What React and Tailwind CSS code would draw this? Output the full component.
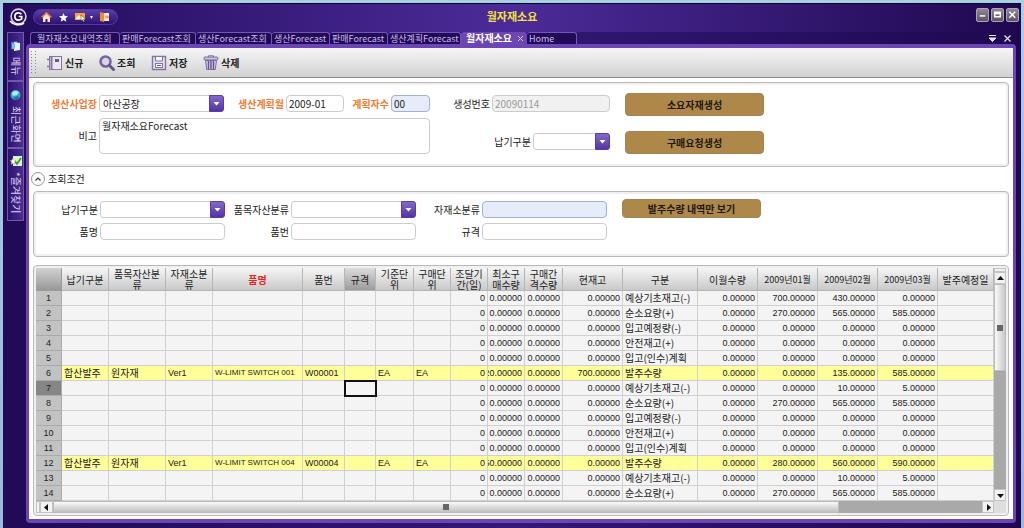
import React from "react";

const toolbarItems = [
  { label: "신규", icon: "note" },
  { label: "조회", icon: "search" },
  { label: "저장", icon: "save" },
  { label: "삭제", icon: "trash" },
];

function ToolIcon({ name }) {
  const common = { width: 16, height: 16, viewBox: "0 0 16 16", fill: "none", "aria-hidden": true };
  if (name === "note")
    return (
      <svg {...common}>
        <rect x="2.5" y="1.5" width="12" height="13" fill="#ebe8f2" stroke="#8375a8" />
        <path d="M4.5 1.5v13" stroke="#8375a8" strokeWidth="2" />
        <path d="M0 4.5h3M0 11.5h3" stroke="#8375a8" strokeWidth="1.4" />
        <rect x="8" y="4" width="4" height="3" fill="#6a5a94" />
      </svg>
    );
  if (name === "search")
    return (
      <svg {...common}>
        <circle cx="6.5" cy="6.5" r="5" fill="#d9d2ea" stroke="#7666a0" strokeWidth="2.6" />
        <path d="M10.5 10.5l4 4" stroke="#65558f" strokeWidth="3" strokeLinecap="round" />
      </svg>
    );
  if (name === "save")
    return (
      <svg {...common}>
        <path d="M1.5 1.5h13v13h-13z" fill="#e2deec" stroke="#8375a8" strokeWidth="1.4" />
        <path d="M4.5 2v4h7V2" stroke="#8375a8" fill="#f6f5fa" />
        <rect x="4.5" y="8.5" width="7" height="4" fill="#f6f5fa" stroke="#8375a8" />
        <path d="M6 10.5h4" stroke="#6a5a94" />
      </svg>
    );
  return (
    <svg {...common}>
      <rect x="1" y="2" width="14" height="3" rx="1" fill="#c7bfdb" stroke="#7c6ca3" />
      <path d="M5.5 2V.8h5V2" stroke="#7c6ca3" />
      <path d="M2.5 5.5h11l-1.2 9h-8.6z" fill="#d4cde4" stroke="#7c6ca3" />
      <path d="M5.5 6v8M8 6v8M10.5 6v8" stroke="#65558f" strokeWidth="1.4" />
    </svg>
  );
}

const fieldBase = "min-w-0 border px-[3px] text-[10px] leading-3 text-[#222] outline-none";

function Label({ htmlFor, required, children }) {
  return (
    <label
      htmlFor={htmlFor}
      className={
        required
          ? "whitespace-nowrap text-right text-[10px] leading-3 font-bold text-[#f37a35]"
          : "whitespace-nowrap text-right text-[10px] leading-3 text-[#222]"
      }
    >
      {children}
    </label>
  );
}

function Select({ id, value, className = "" }) {
  return (
    <div className={"relative flex h-[17px] " + className}>
      <select
        id={id}
        defaultValue={value}
        className={fieldBase + " w-full appearance-none rounded-[3px] border-[#ccc] bg-white pr-5"}
      >
        <option value={value}>{value}</option>
      </select>
      <span className="pointer-events-none absolute inset-y-0 right-0 flex w-[15px] items-center justify-center rounded-r-[3px] border border-[#5a3ba6] bg-linear-to-b from-[#8468c8] to-[#5533a4]">
        <svg width="7" height="4" viewBox="0 0 7 4" aria-hidden="true">
          <path d="M0.5 0h6L3.5 3.6z" fill="#fff" />
        </svg>
      </span>
    </div>
  );
}

function TextField({ id, value = "", tone = "plain", className = "" }) {
  const tones = {
    plain: "border-[#ccc] bg-white text-[#222]",
    blue: "border-[#9fb1d6] bg-[#e6ecf9] text-[#222]",
    off: "border-[#ccc] bg-[#f1f1f1] text-[#999]",
  };
  return (
    <input
      id={id}
      type="text"
      defaultValue={value}
      disabled={tone === "off"}
      className={
        "h-[17px] min-w-0 rounded-[4px] border px-[2px] text-[10px] leading-3 outline-none " + tones[tone] + " " + className
      }
    />
  );
}

function GoldButton({ className, children }) {
  return (
    <button
      type="button"
      className={
        "w-[139px] rounded-[4px] border border-[#a58358] bg-[#ae8849] text-[10px] leading-3 font-bold text-[#20180a] " + className
      }
    >
      {children}
    </button>
  );
}

const panel = "rounded-[4px] border border-[#b9b9b9] bg-white inset-ring-2 inset-ring-[#f0f0f0]";

const columns = [
  { lines: ["납기구분"], w: "w-[47px]" },
  { lines: ["품목자산분", "류"], w: "w-[57px]" },
  { lines: ["자재소분", "류"], w: "w-[47px]" },
  { lines: ["품명"], w: "w-[90px]", red: true },
  { lines: ["품번"], w: "w-[42px]" },
  { lines: ["규격"], w: "w-[31px]", active: true },
  { lines: ["기준단", "위"], w: "w-[38px]" },
  { lines: ["구매단", "위"], w: "w-[37px]" },
  { lines: ["조달기", "간(일)"], w: "w-[37px]" },
  { lines: ["최소구", "매수량"], w: "w-[37px]" },
  { lines: ["구매간", "격수량"], w: "w-[38px]" },
  { lines: ["현재고"], w: "w-[60px]" },
  { lines: ["구분"], w: "w-[75px]" },
  { lines: ["이월수량"], w: "w-[60px]" },
  { lines: ["2009년01월"], w: "w-[60px]", small: true },
  { lines: ["2009년02월"], w: "w-[60px]", small: true },
  { lines: ["2009년03월"], w: "w-[60px]", small: true },
  { lines: ["발주예정일"], w: "" },
];

const Z = "0.00000";
const plain = (kind, a = Z, b = Z, c = Z) => ["", "", "", "", "", "", "", "", "0", Z, Z, Z, kind, Z, a, b, c, ""];
const rows = [
  plain("예상기초재고(-)", "700.00000", "430.00000"),
  plain("순소요량(+)", "270.00000", "565.00000", "585.00000"),
  plain("입고예정량(-)"),
  plain("안전재고(+)"),
  plain("입고(인수)계획"),
  ["합산발주", "원자재", "Ver1", "W-LIMIT SWITCH 001", "W00001", "", "EA", "EA", "0", "20.00000", Z, "700.00000", "발주수량", Z, Z, "135.00000", "585.00000", ""],
  plain("예상기초재고(-)", Z, "10.00000", "5.00000"),
  plain("순소요량(+)", "270.00000", "565.00000", "585.00000"),
  plain("입고예정량(-)"),
  plain("안전재고(+)"),
  plain("입고(인수)계획"),
  ["합산발주", "원자재", "Ver1", "W-LIMIT SWITCH 004", "W00004", "", "EA", "EA", "0", "50.00000", Z, Z, "발주수량", Z, "280.00000", "560.00000", "590.00000", ""],
  plain("예상기초재고(-)", Z, "10.00000", "5.00000"),
  plain("순소요량(+)", "270.00000", "565.00000", "585.00000"),
];

const isNumber = (i) => (i >= 8 && i <= 11) || (i >= 13 && i <= 16);
const isCode = (i) => i === 2 || i === 4 || i === 6 || i === 7;

function cellStyle(i) {
  if (isNumber(i)) return "mr-[2px] justify-end font-[Liberation_Sans] text-[9px]";
  if (i === 3) return "pl-[2px] font-[Liberation_Sans] text-[8px]";
  if (isCode(i)) return "pl-[2px] font-[Liberation_Sans] text-[9px]";
  return "pl-[2px] text-[10px]";
}

function Grid() {
  return (
    <table className="w-full table-fixed border-separate border-spacing-0 bg-[#f4f4f4] text-[#222]">
      <thead>
        <tr>
          <th className="h-[23px] w-[26px] border-r border-b border-[#999] bg-linear-to-b from-[#d2d2d2] to-[#999] p-0" aria-label="번호" />
          {columns.map((c) => (
            <th
              key={c.lines.join("")}
              scope="col"
              className={
                "h-[23px] border-r border-b border-[#b5b5b5] bg-linear-to-b p-0 leading-[11px] whitespace-nowrap " +
                c.w +
                (c.active ? " from-[#dcdcdc] to-[#9c9c9c]" : " from-[#f6f6f6] to-[#c9c9c9]") +
                (c.red ? " font-bold text-[#ee2222]" : " font-normal") +
                (c.small ? " text-[9px]" : " text-[10px]")
              }
            >
              {c.lines.map((l) => (
                <span key={l} className="block">
                  {l}
                </span>
              ))}
            </th>
          ))}
        </tr>
      </thead>
      <tbody>
        {rows.map((r, n) => {
          const marked = r[0] !== "";
          return (
            <tr key={n} className={marked ? "bg-[#ffff99]" : ""}>
              <th
                scope="row"
                className={
                  "h-[15px] border-r border-b border-[#aaa] p-0 text-center font-[Liberation_Sans] text-[9px] leading-[14px] font-normal " +
                  (n === 6 ? "bg-[#868686]" : "bg-[#c2c2c2]")
                }
              >
                {n + 1}
              </th>
              {r.map((v, i) => (
                <td
                  key={i}
                  className={
                    "h-[15px] border-r border-b border-[#d0d0d0] p-0 " +
                    (n === 6 && i === 5 ? "outline-2 -outline-offset-1 outline-[#111]" : "")
                  }
                >
                  <div className={"flex overflow-hidden leading-[14px] whitespace-pre " + cellStyle(i)}>{v}</div>
                </td>
              ))}
            </tr>
          );
        })}
      </tbody>
    </table>
  );
}

function Arrow({ dir }) {
  const paths = { up: "M0 5L3.5 1 7 5z", down: "M0 2h7L3.5 6z", left: "M5 0v7L1 3.5z", right: "M2 0v7l4-3.5z" };
  return (
    <svg width="7" height="7" viewBox="0 0 7 7" aria-hidden="true">
      <path d={paths[dir]} fill="#111" />
    </svg>
  );
}

const scrollBtn = "flex shrink-0 items-center justify-center border border-[#c4c4c4] bg-[#f2f2f2]";

const tabs = [
  { label: "월자재소요내역조회", w: "w-[90px]", first: true },
  { label: "판매Forecast조회", w: "w-[76px]" },
  { label: "생산Forecast조회", w: "w-[76px]" },
  { label: "생산Forecast", w: "w-[58px]" },
  { label: "판매Forecast", w: "w-[58px]" },
  { label: "생산계획Forecast", w: "w-[73px]" },
  { label: "월자재소요", w: "w-[66px]", active: true },
  { label: "Home", w: "w-[50px]" },
];

function SideTab({ label, height, children }) {
  return (
    <button
      type="button"
      className={
        "flex w-[17px] flex-col items-center gap-[5px] border border-[#6f5aa6] bg-linear-to-r from-[#2b1170] to-[#4b2d92] pt-[7px] text-[10px] leading-3 text-[#ddd5f2] " +
        height
      }
    >
      {children}
      <span className="whitespace-nowrap [text-orientation:sideways] [writing-mode:vertical-rl]">{label}</span>
    </button>
  );
}

export default function App() {
  return (
    <div className="flex min-h-screen flex-col bg-linear-to-b from-[#a9cfe2] to-[#9cb8dc] px-[3px] pt-[3px] font-['Noto_Sans_CJK_KR',sans-serif]">
      <div className="flex grow flex-col border-t border-[#0d0430] bg-linear-to-r from-[#210a56] via-[#341876] to-[#1f0850]">
        <header className="grid h-7 grid-cols-[1fr_auto_1fr] items-start bg-linear-to-r from-[#230b5c] via-[#4c2b99] to-[#1f0850] pt-1">
          <div className="flex items-center gap-[5px] pl-[6px]">
            <svg width="19" height="18" viewBox="0 0 19 18" fill="none" aria-hidden="true">
              <circle cx="9.5" cy="8.5" r="7.4" stroke="#d9d2ea" strokeWidth="1.6" />
              <path d="M1 13c3 4 10 5 14 2" stroke="#fff" strokeWidth="1.6" />
              <path d="M12.4 6.2C11.600 5.200 10.600 4.900 9.500 4.900 7.300 4.900 5.900 6.500 5.900 8.500s1.400 3.600 3.600 3.600c1.300 0 2.300-.4 3.200-1.200V8.500H9.700" stroke="#fff" strokeWidth="1.7" />
            </svg>
            <div className="flex h-4 w-[85px] items-center gap-[7px] rounded-full border border-[#54389c] bg-linear-to-b from-[#5a3da6] to-[#2c1170] pl-[7px]">
              <svg width="11" height="10" viewBox="0 0 11 10" aria-hidden="true">
                <path d="M0 5L5.500 0 11 5 9.500 5.500 5.500 2 1.500 5.500z" fill="#ff8a33" />
                <path d="M2 5l3.500-3L9 5v5H6.500V7h-2v3H2z" fill="#ffe3c4" />
              </svg>
              <svg width="9" height="9" viewBox="0 0 10 10" aria-hidden="true">
                <path d="M5 0l1.400 3.400 3.600.3-2.800 2.400.9 3.600L5 7.800 1.900 9.700l.9-3.600L0 3.700l3.600-.3z" fill="#fff" />
              </svg>
              <div className="flex items-center gap-1">
                <svg width="11" height="10" viewBox="0 0 11 10" aria-hidden="true">
                  <path d="M0 1h10v7H0z" fill="#f5a640" />
                  <path d="M1 6l3-3 2 2 1-1v3H1z" fill="#fff3dc" />
                  <path d="M6 3l4.500 4-2 .2 1 2.300-1 .5-1.100-2.300L6 9z" fill="#fff" stroke="#4a2b10" strokeWidth=".5" />
                </svg>
                <svg width="3" height="3" viewBox="0 0 3 3" aria-hidden="true">
                  <path d="M0 0h3L1.500 3z" fill="#fff" />
                </svg>
              </div>
              <svg width="9" height="10" viewBox="0 0 9 10" aria-hidden="true">
                <path d="M3 1h6v8H3z" fill="#ffe6c9" />
                <path d="M0 0l4 1v9L0 9z" fill="#f58a2a" />
                <path d="M5 5h3M7 3.500L8.500 5 7 6.500" stroke="#d9701c" fill="none" />
              </svg>
            </div>
          </div>
          <h1 className="text-[11px] leading-4 font-bold text-[#f3e23b]">월자재소요</h1>
          <div className="flex justify-end gap-[2px] pr-[2px]">
            {["M3 7h6", "M3 3h6v5H3zM3 4.500h6", "M2.500 2.500l6.500 6.500M9 2.500L2.500 9"].map((d, i) => (
              <button
                key={d}
                type="button"
                aria-label={["최소화", "최대화", "닫기"][i]}
                className="flex h-[14px] w-[13px] items-center justify-center rounded-[2px] border border-[#aaa4b4] bg-linear-to-b from-[#8d8892] to-[#5c5664]"
              >
                <svg width="12" height="12" viewBox="0 0 12 12" fill="none" aria-hidden="true">
                  <path d={d} stroke="#fff" strokeWidth="1.600" />
                </svg>
              </button>
            ))}
          </div>
        </header>

        <div className="flex grow">
          <nav className="flex w-[23px] shrink-0 flex-col pl-[4px]" aria-label="사이드 메뉴">
            <SideTab label="메뉴" height="h-[49px]">
              <svg width="11" height="12" viewBox="0 0 11 12" aria-hidden="true">
                <path d="M1 2l6-1v9l-6-1z" fill="#2f6fd6" />
                <path d="M4 2l6 1v7l-6 1z" fill="#e8f2ff" />
                <path d="M2 3l3 .5v5L2 9z" fill="#85b8f5" />
              </svg>
            </SideTab>
            <SideTab label="최근화면" height="h-[67px]">
              <svg width="11" height="12" viewBox="0 0 11 12" aria-hidden="true">
                <circle cx="5.500" cy="6" r="5" fill="#39a5c9" />
                <path d="M2 4c2-3 5-2 7-1L7 6 3 7z" fill="#b5ecf2" />
                <path d="M3 9l5-2 1 2-3 2z" fill="#1f6f9c" />
              </svg>
            </SideTab>
            <SideTab label="*즐겨찾기" height="h-[73px]">
              <svg width="12" height="11" viewBox="0 0 12 11" aria-hidden="true">
                <path d="M3 0h9v10H3z" fill="#dff2d2" />
                <path d="M5 5l2 3 4-6" stroke="#33a02c" strokeWidth="1.800" fill="none" />
                <path d="M3 2l1 2.300 2 .2-1.600 1.600.6 2.400L3 7.300 1 8.500l.6-2.400L0 4.500l2-.2z" fill="#fff" stroke="#999" strokeWidth=".4" />
              </svg>
            </SideTab>
          </nav>

          <div className="flex min-w-0 grow flex-col pr-[5px] pb-[5px]">
            <div className="flex h-3 items-stretch pl-1">
              {tabs.map((t) => (
                <div
                  key={t.label}
                  className={
                    "flex shrink-0 items-center rounded-t-[3px] " +
                    t.w +
                    (t.active
                      ? " bg-[#6d46b4] pl-[5px] text-[10px] font-bold text-white"
                      : " border-t border-r border-[#7258b0] bg-[#22095a] text-[9px] text-[#c9bde8]") +
                    (t.first ? " border-l pl-[6px]" : t.active ? "" : " pl-[2px]")
                  }
                >
                  <button type="button" className="leading-3 whitespace-nowrap">
                    {t.label}
                  </button>
                  {t.active && (
                    <button type="button" aria-label="탭 닫기" className="ml-[6px]">
                      <svg width="5" height="5" viewBox="0 0 5 5" aria-hidden="true">
                        <path d="M0 0l5 5M5 0L0 5" stroke="#d9cdf0" />
                      </svg>
                    </button>
                  )}
                </div>
              ))}
              <div className="flex grow items-center justify-end gap-2 pr-[5px]">
                <button type="button" aria-label="탭 목록">
                  <svg width="7" height="7" viewBox="0 0 7 7" aria-hidden="true">
                    <path d="M0 .5h7M0 3h7L3.500 6.500z" stroke="#e8e0f8" fill="#e8e0f8" />
                  </svg>
                </button>
                <button type="button" aria-label="모두 닫기">
                  <svg width="7" height="7" viewBox="0 0 7 7" aria-hidden="true">
                    <path d="M.5.5l6 6M6.500.5l-6 6" stroke="#e8e0f8" strokeWidth="1.200" />
                  </svg>
                </button>
              </div>
            </div>

            <main className="flex grow flex-col rounded-[4px] border-x-[3px] border-y-4 border-[#6b45b5] bg-white">
              <div className="flex h-[30px] items-center border-b border-[#8c8c8c] bg-linear-to-b from-[#f6f6f6] to-[#d2d2d2] pl-[2px]">
                <svg className="mr-[11px]" width="5" height="24" aria-hidden="true">
                  <path d="M.5 0v24M4.500 0v24" stroke="#8a8a8a" strokeDasharray="1 2" />
                </svg>
                {toolbarItems.map((b) => (
                  <button key={b.label} type="button" className="flex w-[52px] items-center gap-[2px] text-[10px] leading-3 font-bold whitespace-nowrap text-[#222]">
                    <ToolIcon name={b.icon} />
                    {b.label}
                  </button>
                ))}
              </div>

              <div className="flex grow flex-col px-1 pt-1 pb-[3px]">
                <section className={panel + " flex h-[85px] pt-[10px]"}>
                  <div className="grid grid-cols-[63px_125px_58px_58px_43px_39px] content-start items-center gap-x-[2px] gap-y-[6px] pt-[2px]">
                    <Label htmlFor="plant" required>생산사업장</Label>
                    <Select id="plant" value="아산공장" />
                    <Label htmlFor="month" required>생산계획월</Label>
                    <TextField id="month" value="2009-01" />
                    <Label htmlFor="seq" required>계획자수</Label>
                    <TextField id="seq" value="00" tone="blue" />
                    <Label htmlFor="memo">비고</Label>
                    <textarea
                      id="memo"
                      defaultValue="월자재소요Forecast"
                      className="col-span-5 h-9 resize-none rounded-[4px] border border-[#ccc] px-[2px] text-[10px] leading-[14px] text-[#222] outline-none"
                    />
                  </div>
                  <div className="flex w-[180px] flex-col items-end gap-[21px] pt-[2px]">
                    <div className="flex items-center gap-[2px]">
                      <Label htmlFor="serial">생성번호</Label>
                      <TextField id="serial" value="20090114" tone="off" className="w-[118px]" />
                    </div>
                    <div className="flex items-center gap-[2px]">
                      <Label htmlFor="due">납기구분</Label>
                      <Select id="due" value="" className="w-[77px]" />
                    </div>
                  </div>
                  <div className="flex flex-col gap-[15px] pl-[15px]">
                    <GoldButton className="h-[23px]">소요자재생성</GoldButton>
                    <GoldButton className="h-[23px]">구매요청생성</GoldButton>
                  </div>
                </section>

                <div className="-ml-[2px] flex h-6 items-center gap-[3px]">
                  <button type="button" aria-label="접기" className="flex size-[14px] items-center justify-center rounded-full border border-[#999] bg-white">
                    <svg width="6" height="4" viewBox="0 0 6 4" aria-hidden="true">
                      <path d="M.5 3.500L3 1l2.500 2.500" stroke="#333" strokeWidth="1.200" fill="none" />
                    </svg>
                  </button>
                  <h2 className="text-[10px] leading-3 text-[#222]">조회조건</h2>
                </div>

                <section className={panel + " flex h-[66px] pt-[7px]"}>
                  <div className="grid grid-cols-[64px_125px_62px_125px_62px_125px] content-start items-center gap-x-[2px] gap-y-[5px] pt-[2px]">
                    <Label htmlFor="q-due">납기구분</Label>
                    <Select id="q-due" value="" />
                    <Label htmlFor="q-asset">품목자산분류</Label>
                    <Select id="q-asset" value="" />
                    <Label htmlFor="q-sub">자재소분류</Label>
                    <TextField id="q-sub" tone="blue" />
                    <Label htmlFor="q-name">품명</Label>
                    <TextField id="q-name" />
                    <Label htmlFor="q-no">품번</Label>
                    <TextField id="q-no" />
                    <Label htmlFor="q-spec">규격</Label>
                    <TextField id="q-spec" />
                  </div>
                  <div className="pl-[15px]">
                    <GoldButton className="block h-[19px]">발주수량 내역만 보기</GoldButton>
                  </div>
                </section>

                <section className={panel + " mt-2 flex flex-col p-[2px]"}>
                  <div className="flex">
                    <div className="min-w-0 grow">
                      <Grid />
                    </div>
                    <div className="flex w-3 shrink-0 flex-col bg-[#a9a9a9]">
                      <div className={scrollBtn + " h-1"} />
                      <button type="button" aria-label="위로" className={scrollBtn + " h-3"}>
                        <Arrow dir="up" />
                      </button>
                      <div className="flex h-[87px] items-center justify-center border border-[#bbb] bg-linear-to-r from-[#fafafa] to-[#c9c9c9]">
                        <span className="h-[6px] w-[6px] bg-[#666]" />
                      </div>
                      <button type="button" aria-label="아래로" className={scrollBtn + " mt-auto h-3"}>
                        <Arrow dir="down" />
                      </button>
                    </div>
                  </div>
                  <div className="flex h-3 bg-[#a9a9a9]">
                    <div className={scrollBtn + " w-1"} />
                    <button type="button" aria-label="왼쪽으로" className={scrollBtn + " w-[13px]"}>
                      <Arrow dir="left" />
                    </button>
                    <div className="flex w-[81%] items-center justify-center border border-[#bbb] bg-linear-to-b from-[#fafafa] to-[#c0c0c0]">
                      <span className="h-[6px] w-[6px] bg-[#666]" />
                    </div>
                    <button type="button" aria-label="오른쪽으로" className={scrollBtn + " ml-auto w-3"}>
                      <Arrow dir="right" />
                    </button>
                    <div className="w-3 bg-[#dedede]" />
                  </div>
                </section>
              </div>
            </main>
          </div>
        </div>
      </div>
    </div>
  );
}
